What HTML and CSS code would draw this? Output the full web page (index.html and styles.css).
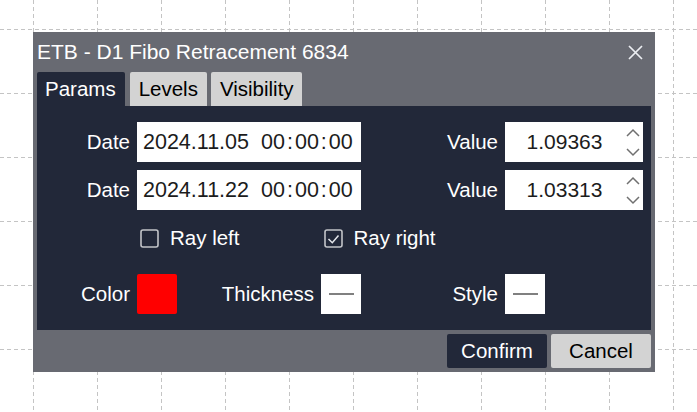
FILE: index.html
```html
<!DOCTYPE html>
<html>
<head>
<meta charset="utf-8">
<link rel="stylesheet" href="styles.css">
</head>
<body>
<svg class="grid" width="697" height="412" viewBox="0 0 697 412">
  <g stroke="#c4c4c4" stroke-width="1" stroke-dasharray="4 3" fill="none">
    <path d="M33.5 0V412M97.5 0V412M161.5 0V412M225.5 0V412M289.5 0V412M353.5 0V412M417.5 0V412M481.5 0V412M545.5 0V412M609.5 0V412M673.5 0V412"/>
    <path d="M0 29.5H697M0 93.5H697M0 157.5H697M0 221.5H697M0 285.5H697M0 349.5H697"/>
  </g>
</svg>
<div class="dialog">
  <div class="titlebar">
    <span class="title">ETB - D1 Fibo Retracement 6834</span>
    <svg class="close" width="15" height="15" viewBox="0 0 15 15"><path d="M1 1L14 14M14 1L1 14" stroke="#eceef2" stroke-width="1.7" fill="none"/></svg>
  </div>
  <div class="tabs">
    <div class="tab active">Params</div>
    <div class="tab">Levels</div>
    <div class="tab wide">Visibility</div>
  </div>
  <div class="panel">
    <div class="label">Date</div>
    <div class="input date">2024.11.05<span class="gap"></span>00<span class="colon">:</span>00<span class="colon">:</span>00</div>
    <div class="label">Value</div>
    <div class="input number">
      <span class="num-text">1.09363</span>
      <svg class="spin" width="20" height="40" viewBox="0 0 20 40"><path d="M4 14L10 8L16 14M4 27L10 33L16 27" stroke="#707070" stroke-width="1.5" fill="none"/></svg>
    </div>

    <div class="label">Date</div>
    <div class="input date">2024.11.22<span class="gap"></span>00<span class="colon">:</span>00<span class="colon">:</span>00</div>
    <div class="label">Value</div>
    <div class="input number">
      <span class="num-text">1.03313</span>
      <svg class="spin" width="20" height="40" viewBox="0 0 20 40"><path d="M4 14L10 8L16 14M4 27L10 33L16 27" stroke="#707070" stroke-width="1.5" fill="none"/></svg>
    </div>

    <div class="checks">
      <label class="check">
        <svg width="19" height="19" viewBox="0 0 19 19"><rect x="1" y="1" width="17" height="17" rx="2" stroke="#c2c4c8" stroke-width="1.6" fill="none"/></svg>
        <span>Ray left</span>
      </label>
      <label class="check">
        <svg width="19" height="19" viewBox="0 0 19 19"><rect x="1" y="1" width="17" height="17" rx="2" stroke="#c2c4c8" stroke-width="1.6" fill="none"/><path d="M4.5 10L8.3 13.7L14.5 6.5" stroke="#e4e6ea" stroke-width="1.5" fill="none"/></svg>
        <span>Ray right</span>
      </label>
    </div>

    <div class="label">Color</div>
    <div class="cell split">
      <div class="swatch"></div>
      <div class="pair"><span class="inline-label">Thickness</span><div class="linebox"><div class="line"></div></div></div>
    </div>
    <div class="label">Style</div>
    <div class="cell"><div class="linebox"><div class="line"></div></div></div>
  </div>
  <div class="footer">
    <button class="btn primary">Confirm</button>
    <button class="btn secondary">Cancel</button>
  </div>
</div>
</body>
</html>
```

FILE: styles.css
```css
html, body {
  margin: 0;
  padding: 0;
  background: #ffffff;
  width: 697px;
  height: 412px;
  overflow: hidden;
  font-family: "Liberation Sans", Arial, sans-serif;
}

.grid {
  position: absolute;
  top: 0;
  left: 0;
  z-index: 0;
}

.dialog {
  position: relative;
  z-index: 1;
  margin: 32px 0 0 33px;
  width: 622px;
  height: 340px;
  box-sizing: border-box;
  padding: 0 4px 4px 4px;
  background: #686a72;
  display: flex;
  flex-direction: column;
}

.titlebar {
  height: 40px;
  display: flex;
  align-items: center;
  justify-content: space-between;
  padding-right: 8px;
}

.title {
  color: #ffffff;
  font-size: 21px;
  white-space: nowrap;
}

.close {
  display: block;
}

.tabs {
  height: 34px;
  display: flex;
  gap: 4px;
}

.tab {
  height: 34px;
  line-height: 34px;
  padding: 0 9px;
  font-size: 20.5px;
  color: #000000;
  background: #d3d3d3;
  border-radius: 2px 2px 0 0;
  white-space: nowrap;
}

.tab.active {
  background: #222839;
  color: #ffffff;
  padding: 0 9px 0 8px;
  margin-right: 1px;
}

.tab.wide {
  padding: 0 8px 0 9px;
}

.panel {
  height: 224px;
  box-sizing: border-box;
  background: #222839;
  padding: 16px 8px 16px 0;
  display: grid;
  grid-template-columns: 93px 224px minmax(0, 1fr) 138px;
  grid-template-rows: 40px 40px 48px 40px;
  column-gap: 7px;
  row-gap: 8px;
}

.label {
  color: #ffffff;
  font-size: 20.5px;
  display: flex;
  align-items: center;
  justify-content: flex-end;
  white-space: nowrap;
}

.input {
  background: #ffffff;
  color: #1c1c1c;
  font-size: 21px;
  display: flex;
  align-items: center;
  white-space: nowrap;
}

.input.date {
  padding-left: 6px;
  font-size: 21.5px;
}

.gap {
  display: inline-block;
  width: 12px;
}

.colon {
  margin: 0 2px;
}

.input.number {
  justify-content: space-between;
}

.num-text {
  flex: 1;
  text-align: center;
  padding-left: 1px;
}

.spin {
  display: block;
  flex: none;
}

.checks {
  grid-column: 2 / 5;
  align-self: start;
  height: 40px;
  display: flex;
  align-items: center;
  gap: 84px;
  padding-left: 3px;
}

.check {
  display: flex;
  align-items: center;
  gap: 11px;
  color: #ffffff;
  font-size: 20.5px;
}

.check svg {
  display: block;
}

.cell {
  display: flex;
  align-items: center;
}

.cell.split {
  justify-content: space-between;
}

.pair {
  display: flex;
  align-items: center;
  gap: 7px;
}

.inline-label {
  color: #ffffff;
  font-size: 20.5px;
}

.swatch {
  width: 40px;
  height: 40px;
  background: #ff0000;
  border-radius: 2px;
}

.linebox {
  width: 40px;
  height: 40px;
  background: #ffffff;
  display: flex;
  align-items: center;
  justify-content: center;
}

.line {
  width: 25px;
  height: 2px;
  background: #808080;
}

.footer {
  margin-top: 4px;
  display: flex;
  justify-content: flex-end;
  gap: 4px;
}

.btn {
  width: 100px;
  height: 34px;
  border: none;
  border-radius: 2px;
  font-family: "Liberation Sans", Arial, sans-serif;
  font-size: 20.5px;
  padding: 0;
}

.btn.primary {
  background: #222839;
  color: #ffffff;
}

.btn.secondary {
  background: #d3d3d3;
  color: #000000;
}
```
